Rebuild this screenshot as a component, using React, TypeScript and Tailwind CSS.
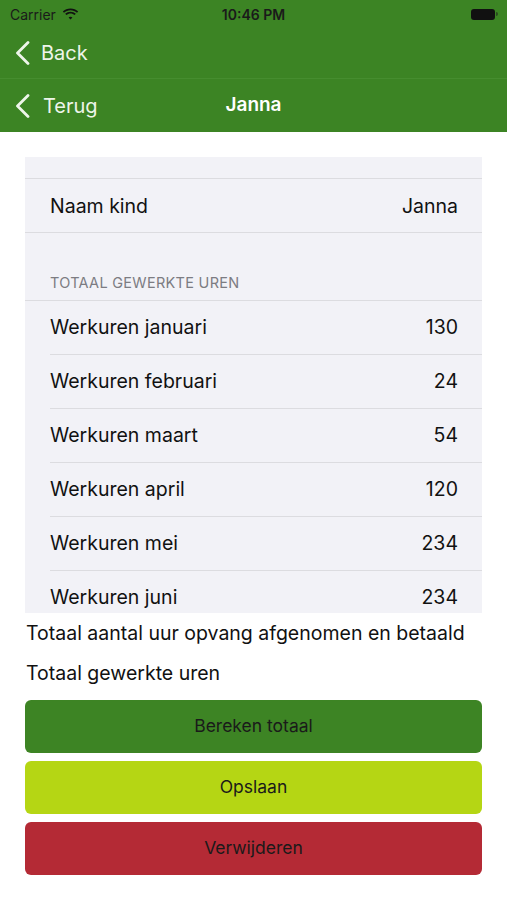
const months = [
  { label: "Werkuren januari", value: "130" },
  { label: "Werkuren februari", value: "24" },
  { label: "Werkuren maart", value: "54" },
  { label: "Werkuren april", value: "120" },
  { label: "Werkuren mei", value: "234" },
  { label: "Werkuren juni", value: "234" },
];

function Wifi() {
  return (
    <svg width="17" height="12" viewBox="0 0 17 12" aria-hidden="true">
      <path d="M8.5 2.2c2.5 0 4.8 1 6.5 2.6l1.2-1.3C14.2 1.6 11.5.4 8.5.4S2.8 1.6.8 3.5L2 4.8C3.7 3.2 6 2.2 8.5 2.2z" fill="#111" />
      <path d="M8.5 5.5c1.6 0 3 .6 4.1 1.6l1.2-1.3C12.4 4.5 10.5 3.7 8.5 3.7S4.6 4.5 3.2 5.8l1.2 1.3c1.1-1 2.5-1.6 4.1-1.6z" fill="#111" />
      <path d="M8.5 8.8c.8 0 1.4.3 1.9.7L8.5 11.6 6.6 9.5c.5-.4 1.1-.7 1.9-.7z" fill="#111" />
    </svg>
  );
}

function BackChevron() {
  return (
    <svg width="16" height="24" viewBox="0 0 16 24" aria-hidden="true" className="shrink-0">
      <polyline
        points="13,1.5 2.5,12 13,22.5"
        fill="none"
        stroke="currentColor"
        strokeWidth="2.8"
        strokeLinecap="round"
        strokeLinejoin="round"
      />
    </svg>
  );
}

export default function App() {
  return (
    <div
      className="flex h-[900px] w-[507px] flex-col bg-white"
      style={{ fontFamily: "Inter, 'Liberation Sans', sans-serif" }}
    >
      <header className="bg-[#3c8424]">
        <div className="relative flex h-[28px] items-center pl-[10px] pr-[9px] text-[14px] text-[#1a1a1a]">
          <div className="flex items-center gap-[6px]">
            <span>Carrier</span>
            <Wifi />
          </div>
          <span className="absolute left-1/2 -translate-x-1/2 font-semibold">10:46 PM</span>
          <div className="ml-auto flex items-center">
            <div className="h-[11px] w-[24px] rounded-[3px] bg-[#111]" />
            <div className="ml-[1px] h-[4px] w-[2px] rounded-r-sm bg-[#2a4a20]" />
          </div>
        </div>
        <div className="flex h-[51px] items-center border-b border-[#468d2f] pl-[15px] text-[20px] text-[#eef5ea]">
          <BackChevron />
          <span className="ml-[10px]">Back</span>
        </div>
        <div className="relative flex h-[53px] items-center pl-[15px] text-[20px] text-[#eef5ea]">
          <BackChevron />
          <span className="ml-[12px]">Terug</span>
          <span className="absolute left-1/2 -translate-x-1/2 text-[19px] font-semibold text-white">Janna</span>
        </div>
      </header>

      <div className="flex flex-col px-[25px] pt-[25px]">
        <div className="flex h-[456px] flex-col overflow-hidden bg-[#f2f2f7] text-[19.5px] text-[#111]">
          <div className="h-[22px] shrink-0 border-b border-[#dcdce0]" />
          <div className="flex h-[54px] shrink-0 items-center justify-between border-b border-[#dcdce0] pl-[25px] pr-[24px] pt-[2px]">
            <span>Naam kind</span>
            <span>Janna</span>
          </div>
          <div className="flex h-[68px] shrink-0 items-end border-b border-[#dcdce0] pb-[6px] pl-[25px] text-[14.5px] uppercase tracking-[0.02em] text-[#7c7c82]">
            Totaal gewerkte uren
          </div>
          {months.map((m, i) => (
            <div className="flex h-[54px] shrink-0 pl-[25px]" key={m.label}>
              <div
                className={`flex flex-1 items-center justify-between pr-[24px] ${
                  i < months.length - 1 ? "border-b border-[#dcdce0]" : ""
                }`}
              >
                <span>{m.label}</span>
                <span>{m.value}</span>
              </div>
            </div>
          ))}
        </div>
        <p className="mt-[7px] pl-[1px] text-[19.5px] leading-[26px] text-[#111]">
          Totaal aantal uur opvang afgenomen en betaald
        </p>
        <p className="mt-[14px] pl-[1px] text-[19.5px] leading-[26px] text-[#111]">Totaal gewerkte uren</p>

        <div className="mt-[14px] flex flex-col gap-[8px] text-[17.5px] text-[#1a1a1a]">
          <button className="h-[53px] rounded-[6px] bg-[#3d8424]" type="button">
            Bereken totaal
          </button>
          <button className="h-[53px] rounded-[6px] bg-[#b5d614]" type="button">
            Opslaan
          </button>
          <button className="h-[53px] rounded-[6px] bg-[#b42a35]" type="button">
            Verwijderen
          </button>
        </div>
      </div>
    </div>
  );
}
